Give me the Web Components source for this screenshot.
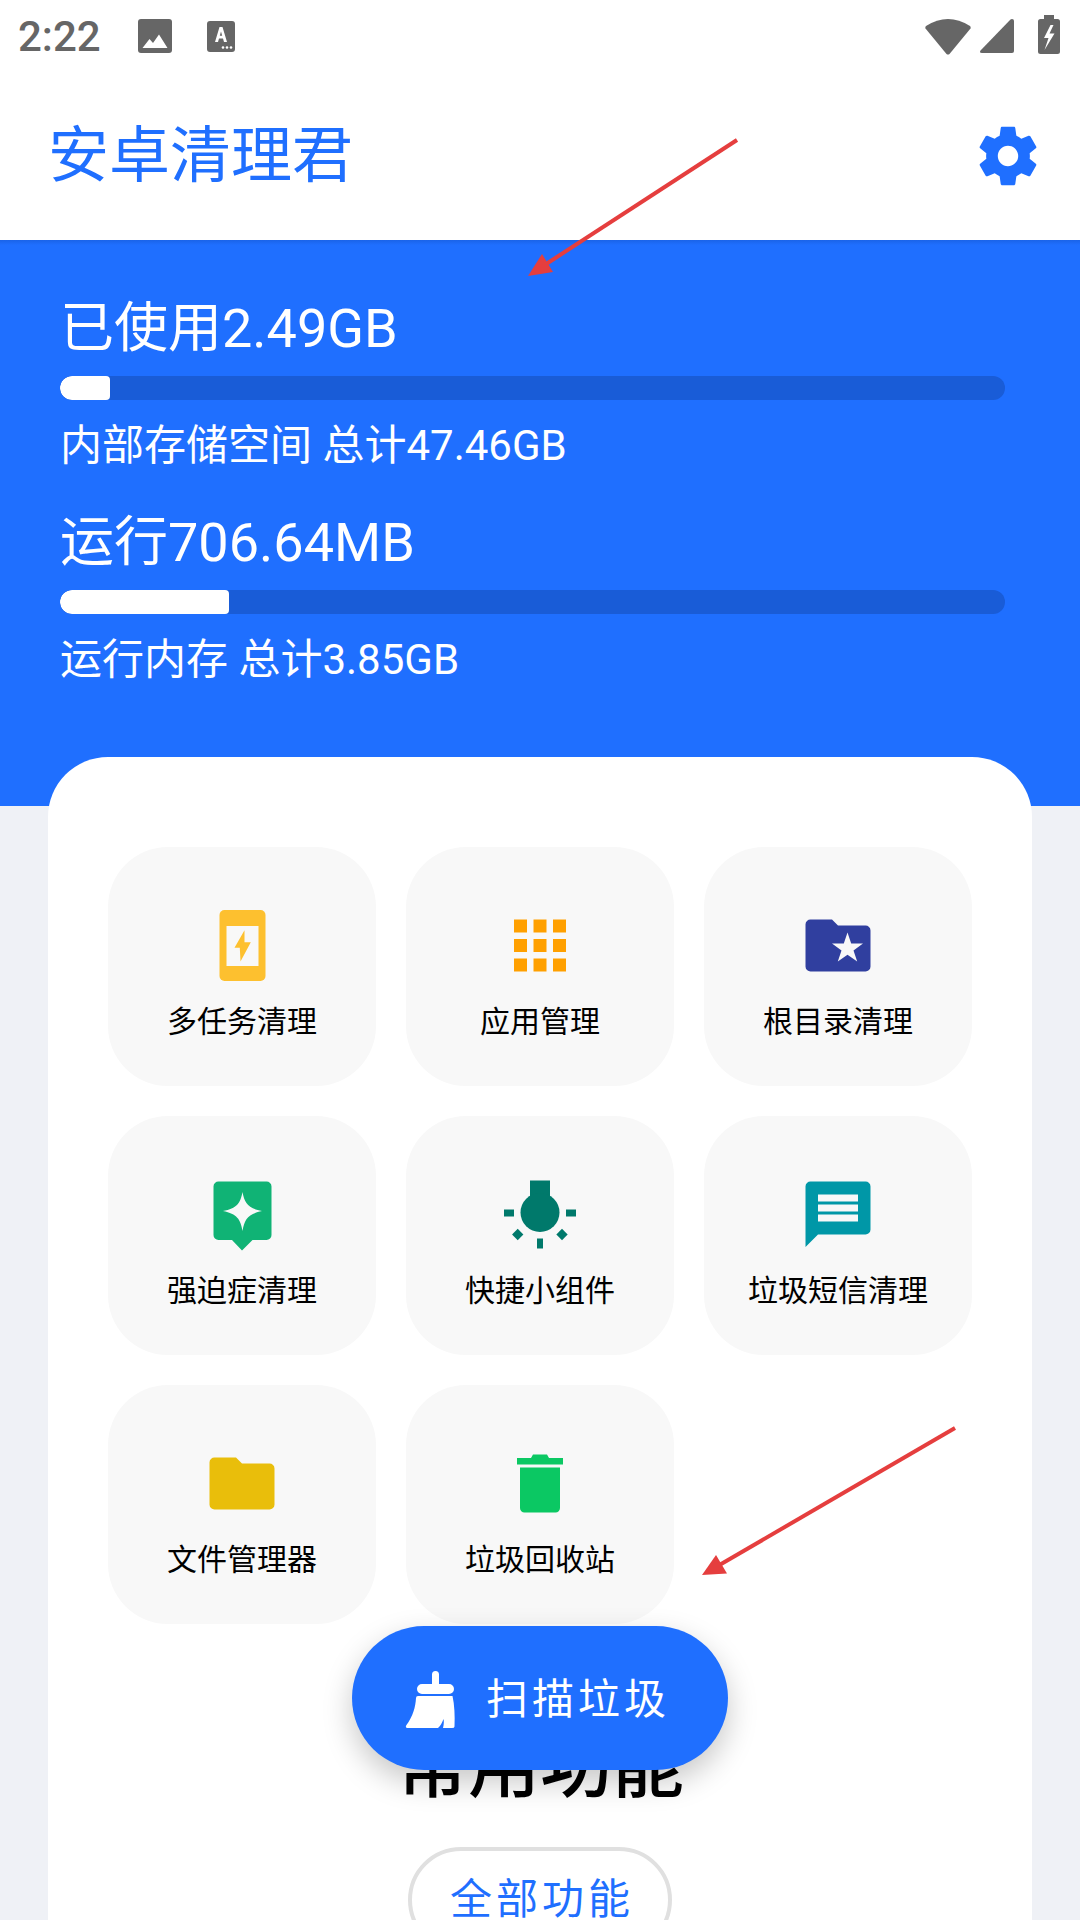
<!DOCTYPE html>
<html lang="zh">
<head>
<meta charset="utf-8">
<title>安卓清理君</title>
<style>
  html, body { margin: 0; padding: 0; }
  body {
    width: 1080px;
    height: 1920px;
    overflow: hidden;
    position: relative;
    background: #eff1f6;
    font-family: Roboto, "Noto Sans CJK SC", sans-serif;
  }
</style>
</head>
<body>
  <status-bar></status-bar>
  <app-bar>安卓清理君</app-bar>
  <usage-panel>
    <usage-meter title-text="已使用2.49GB" sub-text="内部存储空间 总计47.46GB" fill="50"></usage-meter>
    <usage-meter title-text="运行706.64MB" sub-text="运行内存 总计3.85GB" fill="169"></usage-meter>
  </usage-panel>
  <tool-card>
    <tool-tile>
      <svg slot="icon" viewBox="0 0 96 96" width="96" height="96">
        <rect x="25.5" y="13" width="46" height="71" rx="5" fill="#fdc02f"/>
        <rect x="32.5" y="29" width="32" height="40" fill="#f8f8f8"/>
        <path d="M50.500 33.200 L40.500 50.800 H45.800 L46.500 64.500 L56.800 45.200 H50.500Z" fill="#fdc02f"/>
      </svg>
      多任务清理
    </tool-tile>
    <tool-tile>
      <svg slot="icon" viewBox="0 0 96 96" width="96" height="96" fill="#ffa000">
        <rect x="22" y="22.5" width="13" height="13"/><rect x="41.5" y="22.5" width="13" height="13"/><rect x="61" y="22.5" width="13" height="13"/>
        <rect x="22" y="42" width="13" height="13"/><rect x="41.5" y="42" width="13" height="13"/><rect x="61" y="42" width="13" height="13"/>
        <rect x="22" y="61.5" width="13" height="13"/><rect x="41.5" y="61.5" width="13" height="13"/><rect x="61" y="61.5" width="13" height="13"/>
      </svg>
      应用管理
    </tool-tile>
    <tool-tile>
      <svg slot="icon" viewBox="0 0 96 96" width="96" height="96">
        <path d="M20.5 22.5 H42 L48 28.5 H75.5 a5 5 0 0 1 5 5 V69.5 a5 5 0 0 1 -5 5 H20.5 a5 5 0 0 1 -5 -5 V27.5 a5 5 0 0 1 5 -5Z" fill="#303f9f"/>
        <path d="M57.5 35.5 L61.2 46.6 H73 L63.5 53.4 L67.2 64.5 L57.5 57.7 L47.8 64.5 L51.5 53.4 L42 46.6 H53.8Z" fill="#f8f8f8"/>
      </svg>
      根目录清理
    </tool-tile>
    <tool-tile>
      <svg slot="icon" viewBox="0 0 96 96" width="96" height="96">
        <path d="M24.5 15.5 H72.5 a5 5 0 0 1 5 5 V69 a5 5 0 0 1 -5 5 H58.5 L48 84.5 L38 74 H24.5 a5 5 0 0 1 -5 -5 V20.5 a5 5 0 0 1 5 -5Z" fill="#10b375"/>
        <path d="M48.5 26 C50.5 37 54 42.5 68 45 C54 48 50.5 53 48.5 65 C46.5 53 43 48 29 45 C43 42.5 46.5 37 48.5 26Z" fill="#f8f8f8"/>
      </svg>
      强迫症清理
    </tool-tile>
    <tool-tile>
      <svg slot="icon" viewBox="0 0 96 96" width="96" height="96" fill="#00796b">
        <rect x="38" y="14.5" width="20" height="22"/>
        <circle cx="48" cy="46.5" r="19.5"/>
        <rect x="12" y="43.5" width="10" height="7"/>
        <rect x="74" y="43.5" width="10" height="7"/>
        <rect x="45" y="72.5" width="6" height="10"/>
        <rect x="21.7" y="64.5" width="8" height="8" transform="rotate(45 25.7 68.5)"/>
        <rect x="66" y="64.5" width="8" height="8" transform="rotate(45 70 68.5)"/>
      </svg>
      快捷小组件
    </tool-tile>
    <tool-tile>
      <svg slot="icon" viewBox="0 0 96 96" width="96" height="96">
        <path d="M20.5 15.5 H75.5 a5 5 0 0 1 5 5 V63.5 a5 5 0 0 1 -5 5 H28 L15.5 81 V20.5 a5 5 0 0 1 5 -5Z" fill="#0097a7"/>
        <path d="M28 28.5 H68 V35.5 H28Z M28 38.5 H68 V45.5 H28Z M28 48.5 H68 V55.5 H28Z" fill="#f8f8f8"/>
      </svg>
      垃圾短信清理
    </tool-tile>
    <tool-tile>
      <svg slot="icon" viewBox="0 0 96 96" width="96" height="96">
        <path d="M20.5 22.5 H42 L48 28.5 H75.5 a5 5 0 0 1 5 5 V69.5 a5 5 0 0 1 -5 5 H20.5 a5 5 0 0 1 -5 -5 V27.5 a5 5 0 0 1 5 -5Z" fill="#e9be0b"/>
      </svg>
      文件管理器
    </tool-tile>
    <tool-tile>
      <svg slot="icon" viewBox="0 0 96 96" width="96" height="96" fill="#0bc863">
        <path d="M39 23 L41 19.500 H55 L57 23 H71 V29.500 H25 V23Z"/>
        <path d="M28 32.5 H68 V73 a4.5 4.5 0 0 1 -4.5 4.5 H32.5 a4.5 4.5 0 0 1 -4.5 -4.5Z"/>
      </svg>
      垃圾回收站
    </tool-tile>
    <section-title slot="after">常用功能</section-title>
    <outline-button slot="after">全部功能</outline-button>
  </tool-card>
  <scan-fab>扫描垃圾</scan-fab>
  <note-arrows></note-arrows>

<script>
  var status_template = document.createElement("template");
  status_template.innerHTML = `
    <style>
      :host { display: flex; align-items: center; height: 72px; background: #fff; color: #666; padding: 0 20px 0 18px; box-sizing: border-box; }
      #time { font: 500 42px/72px Roboto, sans-serif; width: 120px; position: relative; top: 1px; }
      #left, #right { display: flex; align-items: center; }
      #right { margin-left: auto; }
      svg { display: block; }
    </style>
    <span id="time">2:22</span>
    <div id="left">
      <svg width="34" height="34" viewBox="0 0 34 34">
        <rect width="34" height="34" rx="3" fill="#666"/>
        <path d="M4.5 29 L11.5 20 L15 24 L21 15.5 L29.5 29Z" fill="#fff"/>
      </svg>
      <svg width="28" height="31" viewBox="0 0 28 31" style="margin-left:35px">
        <rect width="28" height="31" rx="3" fill="#666"/>
        <path d="M8 21 L12.5 6 H15.5 L20 21 H17 L16 17.5 H12 L11 21Z M12.8 14.8 H15.2 L14 10.5Z" fill="#fff" fill-rule="evenodd"/>
        <circle cx="16" cy="26.5" r="1.3" fill="#fff"/><circle cx="20" cy="26.5" r="1.3" fill="#fff"/><circle cx="24" cy="26.5" r="1.3" fill="#fff"/>
      </svg>
    </div>
    <div id="right">
      <svg width="46" height="37" viewBox="0 0 46 37">
        <path d="M1 8 Q23 -6 45 8 Q46 9 45.5 10.5 L24.5 36 Q23 37 21.5 36 L.5 10.5 Q0 9 1 8Z" fill="#666"/>
      </svg>
      <svg width="34" height="34" viewBox="0 0 34 34" style="margin-left:9px">
        <path d="M32 0 Q34 0 34 2 V32 Q34 34 32 34 H2 Q-1 34 .5 31.5 L30.5 .5 Q31 0 32 0Z" fill="#666"/>
      </svg>
      <svg width="22" height="39" viewBox="0 0 22 39" style="margin-left:24px;margin-top:-3px">
        <path d="M6 0 H16 V4 H19.5 Q22 4 22 6.5 V36.5 Q22 39 19.5 39 H2.5 Q0 39 0 36.5 V6.5 Q0 4 2.5 4 H6Z" fill="#666"/>
        <path d="M12.5 10 L6 23 H10.5 L6.5 35 L16.5 18.5 H11.5 L15.5 10Z" fill="#fff"/>
      </svg>
    </div>
  `;
  class StatusBar extends HTMLElement {
    constructor(){
      super();
      this.attachShadow({mode:"open"});
      this.shadowRoot.appendChild(status_template.content.cloneNode(true));
    }
  }
  customElements.define("status-bar", StatusBar);

  var appbar_template = document.createElement("template");
  appbar_template.innerHTML = `
    <style>
      :host { display: flex; align-items: center; justify-content: space-between; height: 168px; background: #fff; padding: 0 37px 0 48px; box-sizing: border-box; color: #1f6fff; }
      #title { font: 400 61px/172px Roboto, "Noto Sans CJK SC", sans-serif; }
      svg { display: block; }
    </style>
    <div id="title"><slot></slot></div>
    <svg width="70" height="70" viewBox="0 0 24 24" fill="#1f6fff">
      <path d="M19.43 12.98c.04-.32.07-.64.07-.98s-.03-.66-.07-.98l2.11-1.65c.19-.15.24-.42.12-.64l-2-3.46c-.12-.22-.39-.3-.61-.22l-2.49 1c-.52-.4-1.08-.73-1.69-.98l-.38-2.65C14.46 2.18 14.25 2 14 2h-4c-.25 0-.46.18-.49.42l-.38 2.65c-.61.25-1.17.59-1.69.98l-2.49-1c-.23-.09-.49 0-.61.22l-2 3.46c-.13.22-.07.49.12.64l2.11 1.65c-.04.32-.07.65-.07.98s.03.66.07.98l-2.11 1.65c-.19.15-.24.42-.12.64l2 3.46c.12.22.39.3.61.22l2.49-1c.52.4 1.08.73 1.69.98l.38 2.65c.03.24.24.42.49.42h4c.25 0 .46-.18.49-.42l.38-2.65c.61-.25 1.17-.59 1.69-.98l2.49 1c.23.09.49 0 .61-.22l2-3.46c.12-.22.07-.49-.12-.64l-2.11-1.65zM12 15.5c-1.93 0-3.5-1.57-3.5-3.5s1.57-3.5 3.5-3.5 3.5 1.57 3.5 3.5-1.57 3.5-3.5 3.5z"/>
    </svg>
  `;
  class AppBar extends HTMLElement {
    constructor(){
      super();
      this.attachShadow({mode:"open"});
      this.shadowRoot.appendChild(appbar_template.content.cloneNode(true));
    }
  }
  customElements.define("app-bar", AppBar);

  var panel_template = document.createElement("template");
  panel_template.innerHTML = `
    <style>
      :host { display: flex; flex-direction: column; gap: 40px; height: 566px; box-sizing: border-box; padding: 57px 75px 0 60px; background: linear-gradient(#1a63e8, #1f6fff 5px); color: #fff; }
    </style>
    <slot></slot>
  `;
  class UsagePanel extends HTMLElement {
    constructor(){
      super();
      this.attachShadow({mode:"open"});
      this.shadowRoot.appendChild(panel_template.content.cloneNode(true));
    }
  }
  customElements.define("usage-panel", UsagePanel);

  var meter_template = document.createElement("template");
  meter_template.innerHTML = `
    <style>
      :host { display: block; font-family: Roboto, "Noto Sans CJK SC", sans-serif; }
      #title { font-size: 54px; line-height: 64px; height: 64px; }
      #bar { height: 24px; margin-top: 15px; border-radius: 12px; background: #195cd7; overflow: hidden; }
      #fill { height: 24px; background: #fff; border-radius: 12px 4px 4px 12px; }
      #sub { font-size: 42px; line-height: 50px; margin-top: 21px; }
    </style>
    <div id="title"></div>
    <div id="bar"><div id="fill"></div></div>
    <div id="sub"></div>
  `;
  class UsageMeter extends HTMLElement {
    constructor(){
      super();
      this.attachShadow({mode:"open"});
    }
    connectedCallback(){
      this.shadowRoot.appendChild(meter_template.content.cloneNode(true));
      this.shadowRoot.querySelector("#title").textContent = this.getAttribute("title-text");
      this.shadowRoot.querySelector("#sub").textContent = this.getAttribute("sub-text");
      this.shadowRoot.querySelector("#fill").style.width = this.getAttribute("fill") + "px";
    }
  }
  customElements.define("usage-meter", UsageMeter);

  var card_template = document.createElement("template");
  card_template.innerHTML = `
    <style>
      :host { display: block; margin: -49px 48px 0 48px; padding: 90px 0 0 60px; height: 1200px; box-sizing: border-box; background: #fff; border-radius: 60px 60px 0 0; position: relative; }
      #grid { display: grid; grid-template-columns: repeat(3, 268px); grid-auto-rows: 239px; gap: 30px; }
      #after { display: flex; flex-direction: column; align-items: center; margin-left: -60px; padding-top: 98px; }
    </style>
    <div id="grid"><slot></slot></div>
    <div id="after"><slot name="after"></slot></div>
  `;
  class ToolCard extends HTMLElement {
    constructor(){
      super();
      this.attachShadow({mode:"open"});
      this.shadowRoot.appendChild(card_template.content.cloneNode(true));
    }
  }
  customElements.define("tool-card", ToolCard);

  var tile_template = document.createElement("template");
  tile_template.innerHTML = `
    <style>
      :host { display: flex; flex-direction: column; align-items: center; padding-top: 50px; box-sizing: border-box; background: #f8f8f8; border-radius: 60px; color: #000; font: 400 30px/40px Roboto, "Noto Sans CJK SC", sans-serif; }
      #label { margin-top: 9px; white-space: nowrap; }
      ::slotted(svg) { display: block; }
    </style>
    <slot name="icon"></slot>
    <div id="label"><slot></slot></div>
  `;
  class ToolTile extends HTMLElement {
    constructor(){
      super();
      this.attachShadow({mode:"open"});
      this.shadowRoot.appendChild(tile_template.content.cloneNode(true));
    }
  }
  customElements.define("tool-tile", ToolTile);

  var section_template = document.createElement("template");
  section_template.innerHTML = `
    <style>
      :host { display: block; color: #000; font: 500 72px/90px Roboto, "Noto Sans CJK SC", sans-serif; }
    </style>
    <slot></slot>
  `;
  class SectionTitle extends HTMLElement {
    constructor(){
      super();
      this.attachShadow({mode:"open"});
      this.shadowRoot.appendChild(section_template.content.cloneNode(true));
    }
  }
  customElements.define("section-title", SectionTitle);

  var button_template = document.createElement("template");
  button_template.innerHTML = `
    <style>
      :host { display: flex; align-items: center; justify-content: center; margin-top: 35px; width: 264px; height: 106px; box-sizing: border-box; border: 4px solid #e0e0e0; border-radius: 53px; padding-left: 4px; color: #1f6fff; font: 400 42px/50px Roboto, "Noto Sans CJK SC", sans-serif; letter-spacing: 4px; }
    </style>
    <slot></slot>
  `;
  class OutlineButton extends HTMLElement {
    constructor(){
      super();
      this.attachShadow({mode:"open"});
      this.shadowRoot.appendChild(button_template.content.cloneNode(true));
    }
  }
  customElements.define("outline-button", OutlineButton);

  var fab_template = document.createElement("template");
  fab_template.innerHTML = `
    <style>
      :host { position: absolute; left: 352px; top: 1626px; width: 376px; height: 144px; box-sizing: border-box; display: flex; align-items: center; gap: 30px; padding-left: 53px; background: #1f6fff; border-radius: 72px; color: #fff; font: 400 42px/54px Roboto, "Noto Sans CJK SC", sans-serif; letter-spacing: 4px; box-shadow: 0 12px 30px rgba(0,0,0,.22); }
      svg { display: block; flex: none; }
      #text { padding-top: 3px; margin-left: -1px; }
    </style>
    <svg width="52" height="59" viewBox="0 0 52 59" fill="#fff">
      <path d="M27 5.5 a3.4 3.4 0 0 1 7 0 V15 H44 a5 5 0 0 1 0 10 H17 a5 5 0 0 1 0 -10 H27Z"/>
      <path d="M13 27 H47.5 C49.5 36 50 47 49.5 57.5 Q49.5 59 47 59 H38 C39 55 39 52 38.5 50 C37 54 35.5 57 33 59 H3 C0.5 59 0.5 57.5 1.5 56 C8 47 10.5 38 11 29 Q11 27 13 27Z"/>
    </svg>
    <div id="text"><slot></slot></div>
  `;
  class ScanFab extends HTMLElement {
    constructor(){
      super();
      this.attachShadow({mode:"open"});
      this.shadowRoot.appendChild(fab_template.content.cloneNode(true));
    }
  }
  customElements.define("scan-fab", ScanFab);

  // the two red marks lie over the whole page
  var arrows_template = document.createElement("template");
  arrows_template.innerHTML = `
    <style>
      :host { position: absolute; left: 0; top: 0; width: 1080px; height: 1920px; pointer-events: none; }
      svg { display: block; }
    </style>
    <svg width="1080" height="1920" viewBox="0 0 1080 1920">
      <g fill="#e53e3e" stroke="#e53e3e" stroke-width="4">
        <path d="M737 140 L540 268" fill="none"/>
        <path d="M528 276 L542 254 L553 272Z" stroke="none"/>
        <path d="M955 1428 L716 1567" fill="none"/>
        <path d="M702 1575 L716 1555 L727 1573.500Z" stroke="none"/>
      </g>
    </svg>
  `;
  class NoteArrows extends HTMLElement {
    constructor(){
      super();
      this.attachShadow({mode:"open"});
      this.shadowRoot.appendChild(arrows_template.content.cloneNode(true));
    }
  }
  customElements.define("note-arrows", NoteArrows);
</script>
</body>
</html>
